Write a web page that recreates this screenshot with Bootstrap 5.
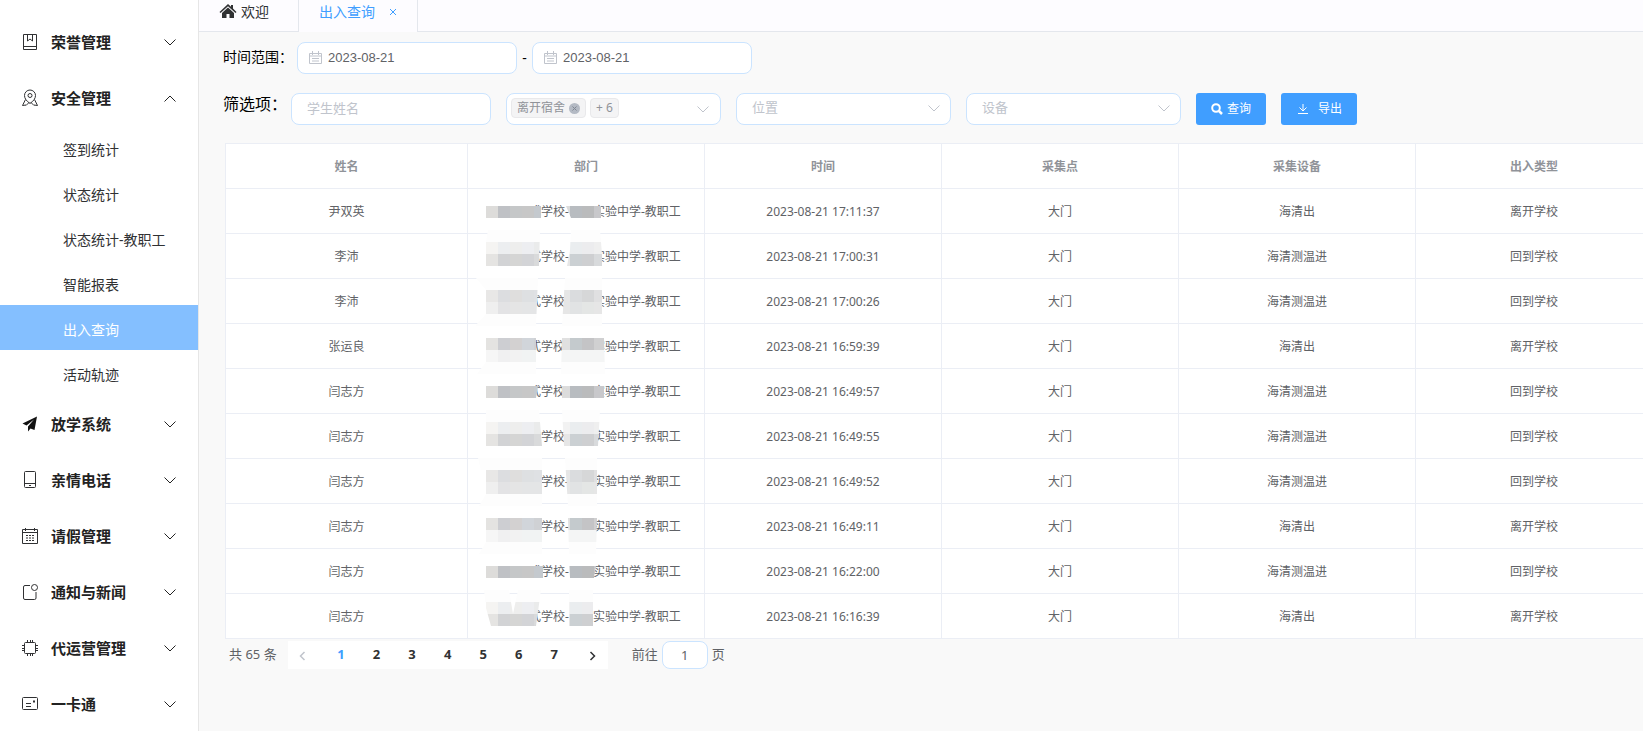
<!DOCTYPE html>
<html lang="zh-CN">
<head>
<meta charset="utf-8">
<meta name="viewport" content="width=device-width, initial-scale=1">
<title>出入查询</title>
<link href="https://cdn.jsdelivr.net/npm/bootstrap@5.3.0/dist/css/bootstrap.min.css" rel="stylesheet">
<style>
  body { font-family: "Noto Sans", "Noto Sans CJK SC", sans-serif; font-size: 14px; background: #f9f9f9; color: #303133; }
  a { text-decoration: none; }
  svg { flex: none; }
  .side { width: 199px; border-right: 1px solid #e6e6e6; background: #fff; padding-top: 13px; }
  .side-item { height: 56px; padding: 2px 22px 0 20px; color: #222; font-size: 15px; font-weight: 700; }
  .side-item span { margin-left: 11px; }
  .side-item .chev { margin-left: auto; }
  .side-sub { display: block; height: 45px; line-height: 50px; padding-left: 63px; color: #303133; }
  .side-sub.current { background: #84bfff; color: #fff; }
  .ico { fill: none; stroke: #303133; stroke-width: 1; }
  .tabs { height: 32px; background: #fdfcff; border-bottom: 1px solid #e4e7ed; }
  .tab-item { height: 32px; border-right: 1px solid #e4e7ed; padding: 0 20px 10px; color: #303133; }
  .tab-item.home { padding-right: 29px; }
  .tab-item.current { background: #fdfcff; color: #409eff; }
  .tab-item button { color: #409eff; padding: 2px 0 0; border: 0; background: none; line-height: 1; display: flex; margin-left: 14px; }
  .filters { padding: 10px 0 18px 24px; color: #000; }
  .filter-row { gap: 15px; }
  .range { margin-bottom: 19px; }
  .range label { padding-bottom: 3px; }
  .dash { width: 15px; text-align: center; }
  .box { height: 32px; border: 1px solid #cbe4ff; border-radius: 8px; background: #fff; font-size: 13px; color: #606266; padding: 0 15px 2px; }
  .box::placeholder { color: #c0c4cc; opacity: 1; }
  .box:focus { outline: 0; border-color: #409eff; }
  .date { width: 220px; padding: 0 11px; gap: 6px; }
  .date svg { margin-bottom: 2px; }
  .date input { border: 0; outline: 0; width: 100%; min-width: 0; padding: 0; color: #606266; font-family: "Liberation Sans", Arial, sans-serif; font-size: 13px; background: none; }
  .w-name { width: 200px; }
  .w-pick { width: 215px; }
  select.box { appearance: none; color: #c0c4cc; }
  .pick > svg { position: absolute; right: 11px; top: 12px; pointer-events: none; }
  .tag { height: 20px; border: 1px solid #e9e9eb; border-radius: 4px; background: #f4f4f5; color: #909399; font-size: 12px; padding: 0 5px; }
  .tag button { border: 0; padding: 0; background: none; display: flex; }
  .act { height: 32px; border: 0; border-radius: 3px; background: #409eff; color: #fff; font-size: 12px; padding: 0 15px; }
  .label-lg { font-size: 16px; line-height: 22px; }
  .grid-wrap { margin-left: 26px; overflow: hidden; }
  .grid { width: 1428px; table-layout: fixed; font-size: 12px; color: #606266; text-align: center; background: #fff; border-top: 1px solid #ebeef5; border-left: 1px solid #ebeef5; border-collapse: separate; border-spacing: 0; }
  .grid th, .grid td { height: 45px; padding: 2px 0 0; line-height: 42px; border-right: 1px solid #ebeef5; border-bottom: 1px solid #ebeef5; white-space: nowrap; }
  .grid th { color: #909399; font-weight: 700; }
  .grid td.dep { padding: 0; }
  .dept { position: relative; width: 200px; height: 44px; line-height: 46px; margin: 0 auto; padding-left: 43px; text-align: left; }
  .dept svg { position: absolute; left: 0; top: 0; width: 200px; height: 44px; overflow: visible; }
  .dept b { display: inline-block; width: 24px; }
  .pager { padding: 2px 0 0 30px; font-size: 13px; color: #606266; }
  .pages { display: grid; grid-template-columns: repeat(9, 1fr); width: 320px; height: 28px; background: #fff; margin: 0 24px 0 11px; }
  .pages button { border: 0; padding: 0; background: none; color: #303133; font-size: 13px; font-weight: 700; }
  .pages .current { color: #409eff; }
  .pages .prev { padding-right: 7px; }
  .pages .next { padding-left: 7px; }
  .jump { width: 46px; height: 28px; padding: 0; margin: 0 4px; text-align: center; }
</style>
</head>
<body>
<svg width="0" height="0" class="position-absolute" aria-hidden="true">
  <defs>
    <symbol id="down" viewBox="0 0 12 7"><path d="M.5.500L6 6 11.500.500" fill="none" stroke="currentColor"/></symbol>
    <symbol id="cal" viewBox="0 0 13 13"><path d="M.5 2.500h12v10H.5zM3.500 0v4M9.500 0v4M.5 5h12M3 7.500h7M3 10h7" fill="none" stroke="#c0c4cc"/></symbol>
    <g id="ma">
      <path fill="#dddcda" d="M0 17h12v12H0z"/><path fill="#bfc1c5" d="M12 17h12v12H12z"/><path fill="#c5c7c8" d="M24 17h12v12H24z"/><path fill="#c7c7c7" d="M36 17h12v12H36z"/><path fill="#c4c9ce" d="M48 17h12v12H48z"/>
      <path fill="#dcdcdc" d="M72 17h12v12H72z"/><path fill="#b8bcc0" d="M84 17h12v12H84z"/><path fill="#babbbc" d="M96 17h12v12H96z"/><path fill="#c8c8cb" d="M108 17h12v12h-12z"/>
    </g>
    <g id="mb">
      <path fill="#fdfdfd" d="M-4-4h124V8H-4z"/>
      <path fill="#f5f4f2" d="M0 8h12v12H0z"/><path fill="#eceef0" d="M12 8h12v12H12z"/><path fill="#eeeeed" d="M24 8h12v12H24z"/><path fill="#edeef1" d="M36 8h12v12H36z"/><path fill="#eaebeb" d="M48 8h12v12H48z"/>
      <path fill="#e5e4e2" d="M0 20h12v12H0z"/><path fill="#d2d3d5" d="M12 20h12v12H12z"/><path fill="#d5d5d4" d="M24 20h12v12H24z"/><path fill="#d3d4d7" d="M36 20h12v12H36z"/><path fill="#d9dadb" d="M48 20h12v12H48z"/>
      <path fill="#f2f2f2" d="M72 8h12v12H72z"/><path fill="#eaedef" d="M84 8h12v12H84z"/><path fill="#ececee" d="M96 8h12v12H96z"/><path fill="#efefef" d="M108 8h12v12h-12z"/>
      <path fill="#e6e6e6" d="M72 20h12v12H72z"/><path fill="#cbd0d3" d="M84 20h12v12H84z"/><path fill="#cecfd1" d="M96 20h12v12H96z"/><path fill="#d8dadc" d="M108 20h12v12h-12z"/>
    </g>
    <g id="mc">
      <path fill="#fdfdfd" d="M-10-1h130v12H-10zM-10 35h130v12H-10z"/>
      <path fill="#e8e7e6" d="M0 11h12v12H0z"/><path fill="#dcdde0" d="M12 11h12v12H12z"/><path fill="#dfdedd" d="M24 11h12v12H24z"/><path fill="#dee0e2" d="M36 11h12v12H36z"/><path fill="#dfe1e4" d="M48 11h12v12H48z"/>
      <path fill="#efefef" d="M0 23h12v12H0z"/><path fill="#e3e3e5" d="M12 23h12v12H12z"/><path fill="#e5e5e5" d="M24 23h12v12H24z"/><path fill="#e4e5e6" d="M36 23h24v12H36z"/>
      <path fill="#e6e6e6" d="M72 11h12v24H72z"/><path fill="#dadcde" d="M84 11h12v12H84z"/><path fill="#d6d7d8" d="M96 11h12v12H96z"/><path fill="#e0e0e1" d="M108 11h12v12h-12z"/>
      <path fill="#e1e3e4" d="M84 23h12v12H84z"/><path fill="#e4e6e5" d="M96 23h12v12H96z"/><path fill="#e6e6e6" d="M108 23h12v12h-12z"/>
    </g>
    <g id="md">
      <path fill="#fdfdfd" d="M-10 38h130v12H-10z"/>
      <path fill="#e4e3e1" d="M0 14h12v12H0z"/><path fill="#cdced2" d="M12 14h12v12H12z"/><path fill="#d3d1d1" d="M24 14h12v12H24z"/><path fill="#d1d5da" d="M36 14h12v12H36z"/><path fill="#cfd1d4" d="M48 14h12v12H48z"/>
      <path fill="#f6f6f6" d="M0 26h12v12H0z"/><path fill="#f0f0f1" d="M12 26h12v12H12z"/><path fill="#f2f2f2" d="M24 26h12v12H24z"/><path fill="#f1f3f3" d="M36 26h24v12H36z"/>
      <path fill="#e0e0e0" d="M72 14h12v12H72z"/><path fill="#c4cacd" d="M84 14h12v12H84z"/><path fill="#c4c4c6" d="M96 14h12v12H96z"/><path fill="#d0d0d1" d="M108 14h12v12h-12z"/>
      <path fill="#f4f5f5" d="M72 26h48v12H72z"/>
    </g>
    <clipPath id="c1"><path d="M0 17h55v12H0zM80 17h35v12H85z"/></clipPath>
    <clipPath id="c2"><path d="M2-4h52l-1 36H0V8zM85-4h29l2 24v12H81l3-16z"/></clipPath>
    <clipPath id="c3"><path d="M-10-1h62l-2 48h-61l11-12V11zM79-1h37v48H76z"/></clipPath>
    <clipPath id="c4"><path d="M0 14h50v36H-9l9-12zM76 14h42l1 36H75z"/></clipPath>
    <clipPath id="c5"><path d="M0 17h52l-2 12H0zM76 17h42v12H76z"/></clipPath>
    <clipPath id="c6"><path d="M0-4h53l3 36H0zM76-4h38l-2 36H78z"/></clipPath>
    <clipPath id="c7"><path d="M-8-1h64v48H-7l7-12zM79-1h32v48H82z"/></clipPath>
    <clipPath id="c8"><path d="M0 14h56v36H-7l7-12zM82 14h29l-1 36H83z"/></clipPath>
    <clipPath id="c9"><path d="M0 17h57v12H0zM83 17h27l-2 12H84z"/></clipPath>
    <clipPath id="c10"><path d="M-2-4h25l4 24 5-24h23l-5 36H5L0 14zM83-4h24v36H83z"/></clipPath>
  </defs>
</svg>

<div class="d-flex min-vh-100">
  <nav class="side flex-shrink-0">
    <a href="#" class="side-item d-flex align-items-center">
      <svg class="ico" width="20" height="18"><path d="M3.500 1.500h13v15h-13zM4 13.500h12M7.500 2v6l2.500-2 2.500 2V2"/></svg><span>荣誉管理</span><svg class="chev" width="12" height="7"><use href="#down"/></svg>
    </a>
    <a href="#" class="side-item d-flex align-items-center">
      <svg class="ico" width="20" height="18"><path d="M10 14.500C6.500 12 4.500 9.500 4.500 6.500a5.500 5.500 0 0 1 11 0c0 3-2 5.500-5.500 8zM5.500 10.500l-3 6 3.500-.500M14.500 10.500l3 6-3.500-.500M6 16.500l3-3M14 16.500l-3-3"/><circle cx="10" cy="6.500" r="2"/></svg><span>安全管理</span><svg class="chev" width="12" height="7"><path d="M.5 6.500L6 1l5.500 5.500" fill="none" stroke="currentColor"/></svg>
    </a>
    <div>
      <a href="#" class="side-sub">签到统计</a>
      <a href="#" class="side-sub">状态统计</a>
      <a href="#" class="side-sub">状态统计-教职工</a>
      <a href="#" class="side-sub">智能报表</a>
      <a href="#" class="side-sub current">出入查询</a>
      <a href="#" class="side-sub">活动轨迹</a>
    </div>
    <a href="#" class="side-item d-flex align-items-center">
      <svg width="20" height="18"><path fill="#111" d="M17 1.500L2.500 8.500 6.500 10.500 14 4.500 8 11.500V16.500l2.500-3 4 1.500z"/></svg><span>放学系统</span><svg class="chev" width="12" height="7"><use href="#down"/></svg>
    </a>
    <a href="#" class="side-item d-flex align-items-center">
      <svg class="ico" width="20" height="18"><rect x="4.500" y=".5" width="11" height="16" rx="1"/><path d="M5 12.500h10M9 14.500h2"/></svg><span>亲情电话</span><svg class="chev" width="12" height="7"><use href="#down"/></svg>
    </a>
    <a href="#" class="side-item d-flex align-items-center">
      <svg class="ico" width="20" height="18"><path d="M2.500 2.500h15v14h-15zM3 5.500h14M5.500 1v3M14.500 1v3"/><path d="M6 8.500h8.500M6 11h8.500M6 13.500h8.500" stroke-dasharray="2 1"/></svg><span>请假管理</span><svg class="chev" width="12" height="7"><use href="#down"/></svg>
    </a>
    <a href="#" class="side-item d-flex align-items-center">
      <svg class="ico" width="20" height="18"><path d="M10 2.500H5A1.500 1.500 0 0 0 3.500 4v11A1.500 1.500 0 0 0 5 16.500h9.500A1.500 1.500 0 0 0 16 15V9"/><circle cx="14.500" cy="4.500" r="3"/></svg><span>通知与新闻</span><svg class="chev" width="12" height="7"><use href="#down"/></svg>
    </a>
    <a href="#" class="side-item d-flex align-items-center">
      <svg class="ico" width="20" height="18"><rect x="4.500" y="3.500" width="11" height="11" rx="1"/><path d="M7.500 1v2M10.500 1v2M12.500 1v2M7.500 15v2M10.500 15v2M12.500 15v2M2 6.500h2M2 9.500h2M2 11.500h2M16 6.500h2M16 9.500h2M16 11.500h2"/></svg><span>代运营管理</span><svg class="chev" width="12" height="7"><use href="#down"/></svg>
    </a>
    <a href="#" class="side-item d-flex align-items-center">
      <svg class="ico" width="20" height="18"><rect x="2.500" y="2.500" width="15" height="12" rx="1"/><path d="M6 8.500h5M6 11.500h5"/><path d="M13 6.500h2" stroke-width="2"/></svg><span>一卡通</span><svg class="chev" width="12" height="7"><use href="#down"/></svg>
    </a>
  </nav>

  <main class="flex-grow-1 overflow-hidden">
    <div class="tabs d-flex">
      <a href="#" class="tab-item home d-flex align-items-center">
        <svg width="18" height="16" class="me-1" viewBox="0 0 18 16"><path fill="#303133" d="M9 1l3 2.700V2h2v3.500L17.500 9l-1 1L9 3.300 1.500 10l-1-1zM9 4.600l6 5.400v5h-4.500v-4h-3v4H3v-5z"/></svg>欢迎
      </a>
      <div class="tab-item current d-flex align-items-center">
        <a href="#" class="text-reset">出入查询</a>
        <button type="button" aria-label="关闭"><svg width="8" height="8"><path d="M1 1l6 6M7 1L1 7" stroke="currentColor" fill="none"/></svg></button>
      </div>
    </div>

    <form class="filters">
      <div class="range d-flex align-items-center">
        <label for="from" class="me-1">时间范围：</label>
        <div class="box date d-flex align-items-center"><svg width="13" height="13"><use href="#cal"/></svg><input id="from" type="text" value="2023-08-21"></div>
        <span class="dash lh-1">-</span>
        <div class="box date d-flex align-items-center"><svg width="13" height="13"><use href="#cal"/></svg><input type="text" value="2023-08-21" aria-label="结束日期"></div>
      </div>
      <div class="d-flex align-items-start">
        <label for="name" class="label-lg me-1">筛选项：</label>
        <div class="filter-row d-flex">
          <input id="name" type="text" class="box w-name" placeholder="学生姓名">
          <div class="box pick w-pick position-relative d-flex align-items-center ps-1" role="group" aria-label="出入类型">
            <span class="tag d-flex align-items-center">离开宿舍<button type="button" class="ms-1" aria-label="移除"><svg width="11" height="11"><circle cx="5.500" cy="5.500" r="5.500" fill="#b4bac4"/><path d="M3.500 3.500l4 4M7.500 3.500l-4 4" stroke="#808793"/></svg></button></span>
            <span class="tag d-flex align-items-center ms-1">+ 6</span>
            <svg width="12" height="7" color="#c0c4cc"><use href="#down"/></svg>
          </div>
          <div class="pick position-relative">
            <select class="box w-pick" aria-label="位置"><option>位置</option></select>
            <svg width="12" height="7" color="#c0c4cc"><use href="#down"/></svg>
          </div>
          <div class="pick position-relative">
            <select class="box w-pick" aria-label="设备"><option>设备</option></select>
            <svg width="12" height="7" color="#c0c4cc"><use href="#down"/></svg>
          </div>
          <button type="button" class="act d-flex align-items-center"><svg width="12" height="12" class="me-1"><circle cx="5" cy="5" r="3.800" fill="none" stroke="#fff" stroke-width="2"/><path d="M8 8l3 3" stroke="#fff" stroke-width="2.500"/></svg>查询</button>
          <button type="button" class="act d-flex align-items-center gap-2"><svg width="14" height="12"><path d="M7 1v7M3.500 4.500L7 8l3.500-3.500M2 10.500h10" fill="none" stroke="#fff"/></svg>导出</button>
        </div>
      </div>
    </form>

    <div class="grid-wrap">
      <table class="grid">
        <colgroup><col style="width:242px"><col><col><col><col><col></colgroup>
        <thead><tr><th>姓名</th><th>部门</th><th>时间</th><th>采集点</th><th>采集设备</th><th>出入类型</th></tr></thead>
        <tbody>
          <tr><td>尹双英</td><td class="dep"><div class="dept">式学校-<b></b>实验中学-教职工<svg><use href="#ma" clip-path="url(#c1)"/></svg></div></td><td>2023-08-21 17:11:37</td><td>大门</td><td>海清出</td><td>离开学校</td></tr>
          <tr><td>李沛</td><td class="dep"><div class="dept">式学校-<b></b>实验中学-教职工<svg><use href="#mb" clip-path="url(#c2)"/></svg></div></td><td>2023-08-21 17:00:31</td><td>大门</td><td>海清测温进</td><td>回到学校</td></tr>
          <tr><td>李沛</td><td class="dep"><div class="dept">式学校-<b></b>实验中学-教职工<svg><use href="#mc" clip-path="url(#c3)"/></svg></div></td><td>2023-08-21 17:00:26</td><td>大门</td><td>海清测温进</td><td>回到学校</td></tr>
          <tr><td>张运良</td><td class="dep"><div class="dept">式学校-<b></b>实验中学-教职工<svg><use href="#md" clip-path="url(#c4)"/></svg></div></td><td>2023-08-21 16:59:39</td><td>大门</td><td>海清出</td><td>离开学校</td></tr>
          <tr><td>闫志方</td><td class="dep"><div class="dept">式学校-<b></b>实验中学-教职工<svg><use href="#ma" clip-path="url(#c5)"/></svg></div></td><td>2023-08-21 16:49:57</td><td>大门</td><td>海清测温进</td><td>回到学校</td></tr>
          <tr><td>闫志方</td><td class="dep"><div class="dept">式学校-<b></b>实验中学-教职工<svg><use href="#mb" clip-path="url(#c6)"/></svg></div></td><td>2023-08-21 16:49:55</td><td>大门</td><td>海清测温进</td><td>回到学校</td></tr>
          <tr><td>闫志方</td><td class="dep"><div class="dept">式学校-<b></b>实验中学-教职工<svg><use href="#mc" clip-path="url(#c7)"/></svg></div></td><td>2023-08-21 16:49:52</td><td>大门</td><td>海清测温进</td><td>回到学校</td></tr>
          <tr><td>闫志方</td><td class="dep"><div class="dept">式学校-<b></b>实验中学-教职工<svg><use href="#md" clip-path="url(#c8)"/></svg></div></td><td>2023-08-21 16:49:11</td><td>大门</td><td>海清出</td><td>离开学校</td></tr>
          <tr><td>闫志方</td><td class="dep"><div class="dept">式学校-<b></b>实验中学-教职工<svg><use href="#ma" clip-path="url(#c9)"/></svg></div></td><td>2023-08-21 16:22:00</td><td>大门</td><td>海清测温进</td><td>回到学校</td></tr>
          <tr><td>闫志方</td><td class="dep"><div class="dept">式学校-<b></b>实验中学-教职工<svg><use href="#mb" clip-path="url(#c10)"/></svg></div></td><td>2023-08-21 16:16:39</td><td>大门</td><td>海清出</td><td>离开学校</td></tr>
        </tbody>
      </table>
    </div>

    <div class="pager d-flex align-items-center">
      <span>共 65 条</span>
      <div class="pages">
        <button type="button" class="prev" aria-label="上一页"><svg width="8" height="10"><path d="M6.500 1l-4 4 4 4" fill="none" stroke="#c0c4cc" stroke-width="1.500"/></svg></button>
        <button type="button" class="current">1</button><button type="button">2</button><button type="button">3</button><button type="button">4</button><button type="button">5</button><button type="button">6</button><button type="button">7</button>
        <button type="button" class="next" aria-label="下一页"><svg width="8" height="10"><path d="M1.500 1l4 4-4 4" fill="none" stroke="#303133" stroke-width="1.500"/></svg></button>
      </div>
      <label for="jump">前往</label><input id="jump" type="text" class="box jump" value="1"><span>页</span>
    </div>
  </main>
</div>
<script src="https://cdn.jsdelivr.net/npm/bootstrap@5.3.0/dist/js/bootstrap.bundle.min.js"></script>
</body>
</html>
